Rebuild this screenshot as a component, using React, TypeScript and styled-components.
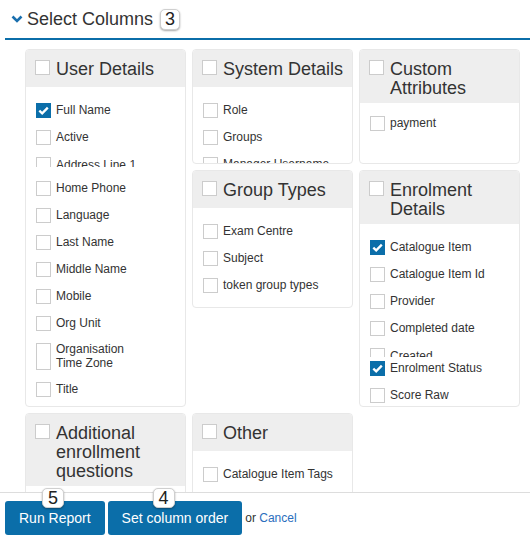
import React from "react";
import styled, { createGlobalStyle } from "styled-components";

const GlobalStyle = createGlobalStyle`
  html, body { margin: 0; padding: 0; background: #fff; }
  body { font-family: "Liberation Sans", Arial, sans-serif; color: #333; }
  * { box-sizing: border-box; }
`;

const Page = styled.div`
  width: 530px;
  height: 538px;
  display: flex;
  flex-direction: column;
  overflow: hidden;
`;

const TitleBar = styled.div`
  flex: none;
  margin-left: 5px;
  height: 40px;
  border-bottom: 2px solid #0b6ea9;
  display: flex;
  align-items: center;
  padding-left: 6px;
`;

const Chevron = styled.svg`
  width: 12px;
  height: 8px;
  margin-right: 4px;
  flex: none;
`;

const Title = styled.h2`
  margin: 0;
  font-size: 18px;
  line-height: 18px;
  font-weight: normal;
  color: #333;
`;

const Badge = styled.span`
  display: inline-flex;
  align-items: center;
  justify-content: center;
  height: 21px;
  min-width: 20px;
  padding: 0 3px;
  background: #fff;
  border: 1px solid #cfcfcf;
  border-radius: 5px;
  box-shadow: 0 1px 2px rgba(0, 0, 0, 0.35);
  font-size: 18px;
  line-height: 18px;
  color: #222;
  font-family: "Liberation Sans", Arial, sans-serif;
`;

const TitleBadge = styled(Badge)`
  margin-left: 7px;
`;

const FloatBadge = styled(Badge)<{ $left: number }>`
  position: absolute;
  top: -13px;
  left: ${(p) => p.$left}px;
  height: 20px;
  min-width: 22px;
`;

const Content = styled.div`
  flex: 1;
  min-height: 0;
  overflow: hidden;
  padding: 9px 0 0 25px;
`;

const Grid = styled.div`
  display: grid;
  grid-template-columns: repeat(3, 161px);
  grid-template-rows: 115px 237px auto;
  gap: 6px;
`;

const Panel = styled.section<{ $span?: number; $fit?: boolean }>`
  grid-row: span ${(p) => p.$span ?? 1};
  align-self: ${(p) => (p.$fit ? "start" : "stretch")};
  border: 1px solid #e8e8e8;
  border-radius: 4px;
  overflow: hidden;
  background: #fff;
  min-height: 0;
`;

const PanelHeader = styled.header`
  display: flex;
  align-items: flex-start;
  gap: 6px;
  background: #eee;
  padding: 10px 4px 5px 9px;
  min-height: 37px;
`;

const PanelTitle = styled.h3`
  margin: 0;
  font-size: 18px;
  line-height: 19px;
  font-weight: normal;
  color: #333;
`;

const PanelBody = styled.ul<{ $top: number }>`
  list-style: none;
  margin: 0;
  padding: ${(p) => p.$top}px 10px 2px 10px;
`;

const Item = styled.li<{ $clip?: number; $pitch?: number }>`
  display: flex;
  align-items: stretch;
  gap: 5px;
  font-size: 12px;
  line-height: 13.5px;
  color: #333;
  ${(p) =>
    p.$clip
      ? `height: ${p.$clip}px; overflow: hidden; margin-bottom: ${(p.$pitch ?? 24) - p.$clip}px;`
      : `min-height: 15px; margin-bottom: 12px;`}
`;

const Box = styled.span<{ $checked?: boolean }>`
  flex: none;
  width: 15px;
  min-height: 15px;
  border: 1px solid ${(p) => (p.$checked ? "#0b6ea9" : "#cccccc")};
  background: ${(p) => (p.$checked ? "#0b6ea9" : "#fff")};
  display: flex;
  align-items: center;
  justify-content: center;
`;

const HeaderBox = styled(Box)`
  height: 15px;
`;

const ItemLabel = styled.span<{ $clipped?: boolean }>`
  align-self: ${(p) => (p.$clipped ? "flex-start" : "center")};
  padding-top: ${(p) => (p.$clipped ? "1.5px" : "0")};
  white-space: pre-line;
`;

const Footer = styled.footer`
  flex: none;
  height: 46px;
  border-top: 1px solid #ddd;
  padding: 8px 5px 3px;
  display: flex;
  align-items: center;
  gap: 3px;
`;

const Button = styled.button`
  position: relative;
  height: 34px;
  padding: 0 14px;
  background: #0b6ea9;
  color: #fff;
  border: none;
  border-radius: 3px;
  font-family: "Liberation Sans", Arial, sans-serif;
  font-size: 14px;
  cursor: pointer;
`;

const OrText = styled.span`
  font-size: 12px;
  color: #333;
`;

const CancelLink = styled.a`
  color: #2a6ebd;
  text-decoration: none;
`;

type Col = { label: string; checked?: boolean; clip?: number; pitch?: number };
type Group = { title: string; span?: number; fit?: boolean; top?: number; items: Col[] };

const groups: Group[] = [
  {
    title: "User Details",
    span: 2,
    items: [
      { label: "Full Name", checked: true },
      { label: "Active" },
      { label: "Address Line 1", clip: 10, pitch: 24 },
      { label: "Home Phone" },
      { label: "Language" },
      { label: "Last Name" },
      { label: "Middle Name" },
      { label: "Mobile" },
      { label: "Org Unit" },
      { label: "Organisation\nTime Zone" },
      { label: "Title" },
    ],
  },
  {
    title: "System Details",
    items: [{ label: "Role" }, { label: "Groups" }, { label: "Manager Username" }],
  },
  { title: "Custom Attributes", top: 13, items: [{ label: "payment" }] },
  {
    title: "Group Types",
    fit: true,
    items: [{ label: "Exam Centre" }, { label: "Subject" }, { label: "token group types" }],
  },
  {
    title: "Enrolment Details",
    items: [
      { label: "Catalogue Item", checked: true },
      { label: "Catalogue Item Id" },
      { label: "Provider" },
      { label: "Completed date" },
      { label: "Created", clip: 9, pitch: 13 },
      { label: "Enrolment Status", checked: true },
      { label: "Score Raw" },
    ],
  },
  { title: "Additional enrollment questions", items: [] },
  { title: "Other", items: [{ label: "Catalogue Item Tags" }] },
];

const Check = () => (
  <svg width="11" height="9" viewBox="0 0 11 9">
    <path d="M1.3 4.6 L4.2 7.3 L9.8 1.6" fill="none" stroke="#fff" strokeWidth="2.3" />
  </svg>
);

export default function App() {
  return (
    <Page>
      <GlobalStyle />
      <TitleBar>
        <Chevron viewBox="0 0 12 8">
          <polyline points="1.5,1.5 6,6 10.5,1.5" fill="none" stroke="#1a6fae" strokeWidth="2.6" />
        </Chevron>
        <Title>Select Columns</Title>
        <TitleBadge>3</TitleBadge>
      </TitleBar>
      <Content>
        <Grid>
          {groups.map((g) => (
            <Panel key={g.title} $span={g.span} $fit={g.fit}>
              <PanelHeader>
                <HeaderBox />
                <PanelTitle>{g.title}</PanelTitle>
              </PanelHeader>
              <PanelBody $top={g.top ?? 16}>
                {g.items.map((it) => (
                  <Item key={it.label} $clip={it.clip} $pitch={it.pitch}>
                    <Box $checked={it.checked}>{it.checked && <Check />}</Box>
                    <ItemLabel $clipped={!!it.clip}>{it.label}</ItemLabel>
                  </Item>
                ))}
              </PanelBody>
            </Panel>
          ))}
        </Grid>
      </Content>
      <Footer>
        <Button>
          Run Report
          <FloatBadge $left={37}>5</FloatBadge>
        </Button>
        <Button>
          Set column order
          <FloatBadge $left={45}>4</FloatBadge>
        </Button>
        <OrText>
          or <CancelLink href="#">Cancel</CancelLink>
        </OrText>
      </Footer>
    </Page>
  );
}
